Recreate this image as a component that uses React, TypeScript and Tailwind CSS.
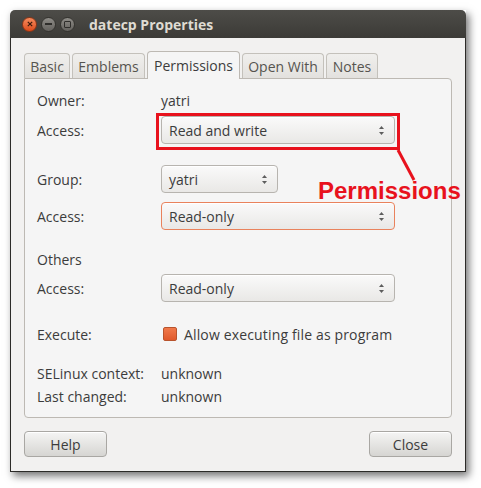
import React from 'react'

const font = { fontFamily: '"Open Sans", "DejaVu Sans", sans-serif' }

type ComboProps = { value: string; width: string; focused?: boolean }

const Combo = ({ value, width, focused }: ComboProps) => (
  <div
    className={`${width} h-[28px] flex items-center justify-between pl-[7px] pr-[9px] rounded-[4px] border bg-gradient-to-b from-[#fafafa] to-[#e9e8e6] shadow-[inset_0_1px_0_#ffffff] ${
      focused ? 'border-[#e9825c]' : 'border-[#b7b4af]'
    }`}
  >
    <span className="text-[14px] text-[#3c3c3c]">{value}</span>
    <Arrows />
  </div>
)

const Arrows = () => (
  <svg width="7" height="11" viewBox="0 0 7 11">
    <path d="M3.5 1 L6 4 L1 4 Z" fill="#5d5d5d" />
    <path d="M3.5 10 L6 7 L1 7 Z" fill="#5d5d5d" />
  </svg>
)

const Row = ({
  label,
  children,
  h = 'h-[20px]',
  mt,
}: {
  label?: string
  children?: React.ReactNode
  h?: string
  mt: string
}) => (
  <div className={`flex items-center ${h} ${mt}`}>
    <div className="w-[124px] shrink-0 text-[14px] text-[#3c3c3c]">{label}</div>
    {children}
  </div>
)

const Tab = ({ label, active, w }: { label: string; active?: boolean; w: string }) =>
  active ? (
    <div
      className={`${w} h-[28px] -mb-px relative z-10 flex items-center justify-center rounded-t-[4px] border border-b-0 border-[#bdb9b3] bg-[#f5f5f5] text-[14px] text-[#3c3c3c]`}
    >
      {label}
    </div>
  ) : (
    <div
      className={`${w} h-[25px] flex items-center justify-center rounded-t-[4px] border border-b-0 border-[#c4c1bb] bg-gradient-to-b from-[#f0efed] to-[#e3e1de] text-[14px] text-[#56544f]`}
    >
      {label}
    </div>
  )

const Button = ({ label }: { label: string }) => (
  <div className="w-[83px] h-[26px] flex items-center justify-center rounded-[4px] border border-[#a9a7a3] bg-gradient-to-b from-[#f5f5f4] to-[#d6d5d2] shadow-[inset_0_1px_0_#ffffff] text-[14px] text-[#3c3c3c]">
    {label}
  </div>
)

const TitleButtons = () => (
  <div className="flex items-center gap-[4px]">
    <div className="w-[15px] h-[15px] rounded-full bg-gradient-to-b from-[#f58a5c] to-[#dc4a17] border border-[#8c3516] flex items-center justify-center">
      <svg width="6" height="6" viewBox="0 0 6 6">
        <path d="M0.8 0.8 L5.2 5.2 M5.2 0.8 L0.8 5.2" stroke="#3a1a0c" strokeWidth="1.2" />
      </svg>
    </div>
    <div className="w-[15px] h-[15px] rounded-full bg-gradient-to-b from-[#8e8c87] to-[#64625e] border border-[#34332f] flex items-center justify-center">
      <div className="w-[7px] h-[1.5px] bg-[#2f2e2b]" />
    </div>
    <div className="w-[15px] h-[15px] rounded-full bg-gradient-to-b from-[#8e8c87] to-[#64625e] border border-[#34332f] flex items-center justify-center">
      <div className="w-[7px] h-[7px] border border-[#2f2e2b] rounded-[1px]" />
    </div>
  </div>
)

export default function App() {
  return (
    <div className="relative w-[481px] h-[488px] bg-white overflow-hidden" style={font}>
      <div className="absolute left-[10px] top-[10px] w-[456px] h-[462px] flex flex-col shadow-[3px_4px_8px_rgba(0,0,0,0.55)]">
        {/* title bar */}
        <div className="h-[28px] shrink-0 flex items-center pl-[12px] gap-[14px] rounded-t-[5px] bg-gradient-to-b from-[#4d4c48] to-[#3c3b37]">
          <TitleButtons />
          <span className="text-[14px] font-bold text-[#dfdbd2]">datecp Properties</span>
        </div>

        {/* body */}
        <div className="flex-1 flex flex-col bg-[#f2f1f0] border border-t-0 border-[#2c2b28] px-[13px] pt-[13px] pb-[13px]">
          <div className="flex items-end gap-[2px]">
            <Tab label="Basic" w="w-[46px]" />
            <Tab label="Emblems" w="w-[73px]" />
            <Tab label="Permissions" w="w-[93px]" active />
            <Tab label="Open With" w="w-[82px]" />
            <Tab label="Notes" w="w-[52px]" />
          </div>

          <div className="h-[340px] flex flex-col border border-[#bdb9b3] rounded-b-[4px] rounded-tr-[4px] bg-[#f5f5f5] pl-[12px]">
            <Row label="Owner:" mt="mt-[11px]">
              <span className="text-[14px] text-[#3c3c3c]">yatri</span>
            </Row>
            <Row label="Access:" h="h-[28px]" mt="mt-[6px]">
              <Combo value="Read and write" width="w-[234px]" />
            </Row>
            <Row label="Group:" h="h-[28px]" mt="mt-[21px]">
              <Combo value="yatri" width="w-[117px]" />
            </Row>
            <Row label="Access:" h="h-[28px]" mt="mt-[9px]">
              <Combo value="Read-only" width="w-[234px]" focused />
            </Row>
            <Row label="Others" mt="mt-[19px]" />
            <Row label="Access:" h="h-[28px]" mt="mt-[5px]">
              <Combo value="Read-only" width="w-[234px]" />
            </Row>
            <Row label="Execute:" mt="mt-[22px]">
              <div className="flex items-center gap-[7px] pl-[2px]">
                <div className="w-[14px] h-[14px] rounded-[2px] border border-[#b8532c] bg-gradient-to-b from-[#f0794a] to-[#e0582a]" />
                <span className="text-[14px] tracking-[0.15px] text-[#3c3c3c]">Allow executing file as program</span>
              </div>
            </Row>
            <Row label="SELinux context:" mt="mt-[19px]">
              <span className="text-[14px] text-[#3c3c3c]">unknown</span>
            </Row>
            <Row label="Last changed:" mt="mt-[3px]">
              <span className="text-[14px] text-[#3c3c3c]">unknown</span>
            </Row>
          </div>

          <div className="flex justify-between mt-[13px]">
            <Button label="Help" />
            <Button label="Close" />
          </div>
        </div>
      </div>

      {/* annotation */}
      <div className="absolute left-[156px] top-[113px] w-[244px] h-[37px] border-[3px] border-[#e8121d]" />
      <svg className="absolute left-0 top-0" width="481" height="488">
        <line x1="398" y1="150" x2="414" y2="180" stroke="#e8121d" strokeWidth="3" />
      </svg>
      <div
        className="absolute left-[318px] top-[179px] text-[24px] leading-[24px] font-bold text-[#e8121d]"
        style={{ fontFamily: '"Liberation Sans", Arial, sans-serif' }}
      >
        Permissions
      </div>
    </div>
  )
}
